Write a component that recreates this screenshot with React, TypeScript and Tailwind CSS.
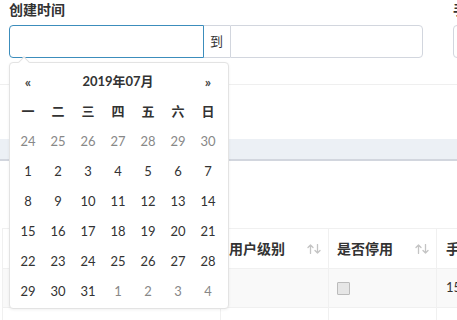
import React from "react";

const FONT = { fontFamily: "Lato, 'Noto Sans CJK SC', sans-serif" };

function SortIcon() {
  return (
    <svg width="14" height="10" viewBox="0 0 14 10" fill="none" stroke="#c4c4c4" strokeWidth="1.3" strokeLinecap="round" strokeLinejoin="round">
      <path d="M3.5 9.5V1M1 3.5L3.5 1L6 3.5" />
      <path d="M10.5 0.5V9M8 6.5L10.5 9L13 6.5" />
    </svg>
  );
}

const weeks: { d: number; o: boolean }[][] = [
  [24, 25, 26, 27, 28, 29, 30].map((d) => ({ d, o: true })),
  [1, 2, 3, 4, 5, 6, 7].map((d) => ({ d, o: false })),
  [8, 9, 10, 11, 12, 13, 14].map((d) => ({ d, o: false })),
  [15, 16, 17, 18, 19, 20, 21].map((d) => ({ d, o: false })),
  [22, 23, 24, 25, 26, 27, 28].map((d) => ({ d, o: false })),
  [
    { d: 29, o: false },
    { d: 30, o: false },
    { d: 31, o: false },
    { d: 1, o: true },
    { d: 2, o: true },
    { d: 3, o: true },
    { d: 4, o: true },
  ],
];

export default function App() {
  return (
    <div className="relative w-[457px] h-[320px] overflow-hidden bg-white text-[#333]" style={FONT}>
      {/* filter section */}
      <div className="h-[85px] border-b border-[#efefef]">
        <div className="flex pl-[9px] gap-[30px]">
          <div className="w-[414px] shrink-0">
            <div className="h-[20px] leading-[20px] text-[14px] font-bold">创建时间</div>
            <div className="mt-[5px] flex h-[33px]">
              <div className="w-[195px] h-full border border-[#3c8dbc] rounded-l-[4px]" />
              <div className="w-[26px] h-full border-y border-[#d2d6de] flex items-center justify-center text-[13px] pr-[1px]">到</div>
              <div className="w-[193px] h-full border border-[#d2d6de] rounded-r-[4px]" />
            </div>
          </div>
          <div className="w-[200px] shrink-0">
            <div className="h-[20px] leading-[20px] text-[14px] font-bold">手机号码</div>
            <div className="mt-[5px] h-[33px] border border-[#d2d6de] rounded-[4px]" />
          </div>
        </div>
      </div>

      <div className="h-[54px]" />
      <div className="h-[22px] bg-[#ecf0f5] border-b-2 border-[#d2d6de]" />
      <div className="h-[67px]" />

      {/* table */}
      <div className="ml-[2px] border-l border-[#f0f0f0]">
        <div className="flex h-[40px] border-t border-[#f0f0f0] text-[14px] font-bold">
          <div className="w-[218px] shrink-0 border-r border-[#f0f0f0]" />
          <div className="w-[108px] shrink-0 border-r border-[#f0f0f0] flex items-center justify-between pl-[8px] pr-[7px]">
            <span>用户级别</span>
            <SortIcon />
          </div>
          <div className="w-[108px] shrink-0 border-r border-[#f0f0f0] flex items-center justify-between pl-[8px] pr-[7px]">
            <span>是否停用</span>
            <SortIcon />
          </div>
          <div className="flex-1 flex items-center pl-[9px] whitespace-nowrap">手机号码</div>
        </div>
        <div className="flex h-[39px] border-t border-[#f0f0f0] bg-[#f9f9f9] text-[13px]">
          <div className="w-[218px] shrink-0 border-r border-[#f0f0f0]" />
          <div className="w-[108px] shrink-0 border-r border-[#f0f0f0]" />
          <div className="w-[108px] shrink-0 border-r border-[#f0f0f0] flex items-center pl-[8px]">
            <div className="w-[13px] h-[13px] bg-[#e6e6e6] border border-[#bbb] rounded-[1px]" />
          </div>
          <div className="flex-1 flex items-center pl-[9px] whitespace-nowrap">15800000000</div>
        </div>
        <div className="flex h-[40px] border-t border-[#f0f0f0]">
          <div className="w-[218px] shrink-0 border-r border-[#f0f0f0]" />
          <div className="w-[108px] shrink-0 border-r border-[#f0f0f0]" />
          <div className="w-[108px] shrink-0 border-r border-[#f0f0f0]" />
          <div className="flex-1" />
        </div>
      </div>

      {/* date picker popup */}
      <div className="absolute left-[9px] top-[62px] w-[220px] h-[247px] bg-white border border-[#e3e3e3] rounded-[4px] shadow-[0_1px_3px_rgba(0,0,0,0.06)] pl-[3px] pr-[5px] pt-[4px]">
        <div className="absolute left-[10px] top-[-5px] w-[8px] h-[8px] rotate-45 bg-white border-l border-t border-[#e3e3e3]" />
        <div className="grid grid-cols-7 h-[30px] items-center text-center">
          <div className="text-[14px] font-bold leading-none text-[#444]">«</div>
          <div className="col-span-5 text-[13px] font-bold">2019年07月</div>
          <div className="text-[14px] font-bold leading-none text-[#444]">»</div>
        </div>
        <div className="grid grid-cols-7 h-[30px] items-center text-center text-[13px] font-bold">
          {["一", "二", "三", "四", "五", "六", "日"].map((w) => (
            <div key={w}>{w}</div>
          ))}
        </div>
        {weeks.map((row, i) => (
          <div key={i} className="grid grid-cols-7 h-[30px] items-center text-center text-[13px]">
            {row.map((c, j) => (
              <div key={j} className={c.o ? "text-[#888]" : "text-[#333]"}>
                {c.d}
              </div>
            ))}
          </div>
        ))}
      </div>
    </div>
  );
}
